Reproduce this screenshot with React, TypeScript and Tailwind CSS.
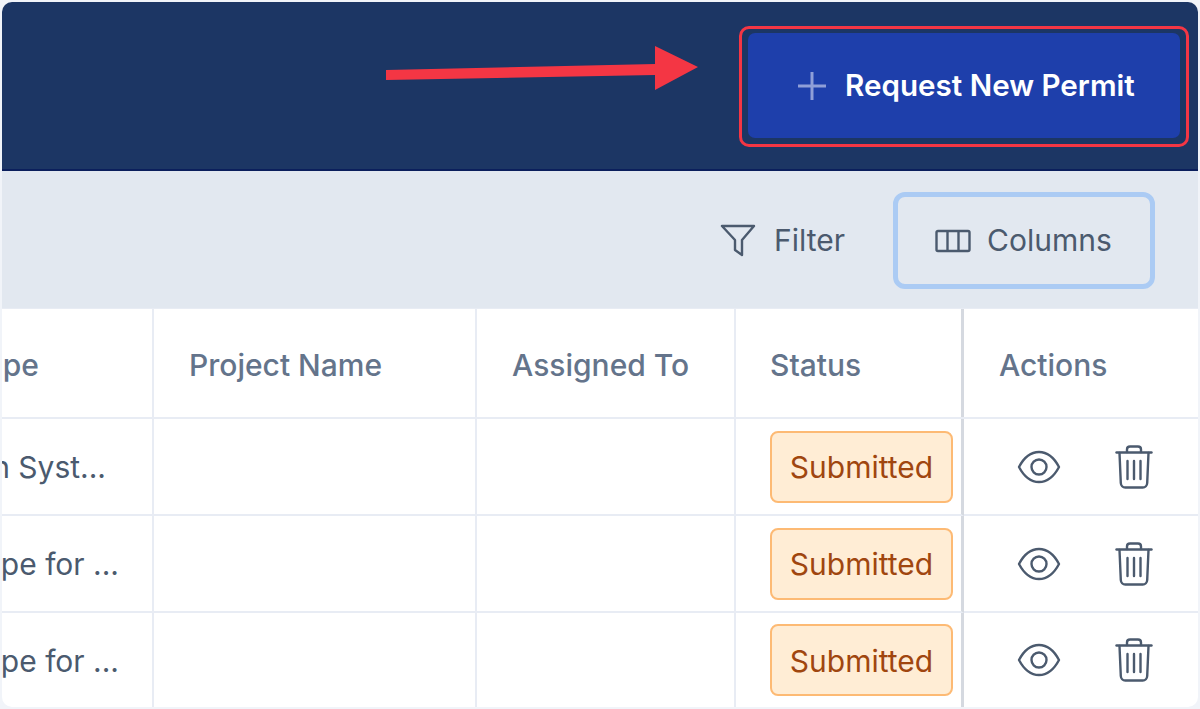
const font = "font-['Inter',sans-serif]";

function EyeIcon() {
  return (
    <svg width="44" height="36" viewBox="0 0 44 36" fill="none" stroke="#4b5a6e" strokeWidth="2.4" strokeLinejoin="round">
      <path d="M2 18C7 8.500 14 3 22 3s15 5.500 20 15c-5 9.500-12 15-20 15S7 27.500 2 18Z" />
      <circle cx="22" cy="18" r="7.500" />
    </svg>
  );
}

function TrashIcon() {
  return (
    <svg width="38" height="44" viewBox="0 0 38 44" fill="none" stroke="#4b5a6e" strokeWidth="2.400" strokeLinecap="round" strokeLinejoin="round">
      <path d="M1.500 7.500h35" />
      <path d="M12 7V4.500C12 2.800 13.300 1.500 15 1.500h8c1.700 0 3 1.300 3 3V7" />
      <path d="M4.500 8l1.300 30c.1 2.500 2 4.500 4.500 4.500h17.400c2.500 0 4.400-2 4.500-4.500L33.500 8" />
      <path d="M12.500 16v18M19 16v18M25.500 16v18" />
    </svg>
  );
}

function Row({ text, end, last }: { text: string; end: string; last?: boolean }) {
  const line = last ? '' : 'border-b-[2px] border-b-[#e8ecf4]';
  return (
    <div className={`grid grid-cols-[152px_323px_259px_228px_1fr] ${last ? 'h-[94px]' : 'h-[97px]'}`}>
      <div className={`flex items-center justify-end overflow-hidden whitespace-nowrap pt-[2px] text-[30px] text-[#4b5a6e] border-r-[2px] border-r-[#e8ecf4] ${end} ${line}`}>
        {text}
      </div>
      <div className={`border-r-[2px] border-r-[#e8ecf4] ${line}`} />
      <div className={`border-r-[2px] border-r-[#e8ecf4] ${line}`} />
      <div className={`flex items-center pl-[34px] border-r-[3px] border-r-[#d5d9e0] ${line}`}>
        <span className="flex h-[72px] w-[183px] items-center justify-center rounded-[8px] border-[2px] border-[#fdba74] bg-[#ffedd5] pt-[2px] text-[30px] text-[#a0460f]">
          Submitted
        </span>
      </div>
      <div className={`flex items-center gap-[54px] pl-[53px] ${line}`}>
        <EyeIcon />
        <TrashIcon />
      </div>
    </div>
  );
}

export default function App() {
  return (
    <div className={`relative h-[709px] w-[1200px] overflow-hidden bg-[#f1f4f9] p-[2px] ${font}`}>
      <div className="flex h-[705px] flex-col overflow-hidden rounded-[10px] bg-white">
        <div className="flex h-[169px] shrink-0 items-start justify-end border-b-[2px] border-b-[#0b1f5c] bg-[#1c3664] pr-[18px] pt-[31px]">
          <button className="flex h-[105px] w-[432px] items-center gap-[19px] rounded-[7px] bg-[#1e3fab] pl-[50px] text-[29.6px] font-semibold text-white">
            <svg width="28" height="28" viewBox="0 0 28 28" fill="none" stroke="#8f9fd8" strokeWidth="3">
              <path d="M14 0v28M0 14h28" />
            </svg>
            Request New Permit
          </button>
        </div>

        <div className="flex h-[138px] shrink-0 items-center justify-end border-b border-b-[#e8ecf4] bg-[#e2e8f0] pt-[2px] pr-[43px] text-[30px] text-[#4b5a6e]">
          <div className="flex items-center gap-[18px]">
            <svg width="36" height="33" viewBox="0 0 36 33" fill="none" stroke="#4b5a6e" strokeWidth="2.400" strokeLinejoin="round">
              <path d="M2 2h32L22 16v15l-7-5V16Z" />
            </svg>
            Filter
          </div>
          <div className="ml-[48px] flex h-[97px] w-[262px] items-center gap-[16px] rounded-[12px] border-[5px] border-[#abcbf4] pl-[37px]">
            <svg width="36" height="24" viewBox="0 0 36 24" fill="none" stroke="#4b5a6e" strokeWidth="2.400">
              <rect x="1.500" y="2" width="33" height="20" rx="1.500" />
              <path d="M12.500 2v20M23.500 2v20" />
            </svg>
            Columns
          </div>
        </div>

        <div className="grid h-[110px] shrink-0 grid-cols-[152px_323px_259px_228px_1fr] border-b-[2px] border-b-[#e8ecf4] text-[30px] font-medium text-[#64748b]">
          <div className="flex items-center justify-end overflow-hidden border-r-[2px] border-r-[#e8ecf4] pr-[113px] pt-[5px]">pe</div>
          <div className="flex items-center border-r-[2px] border-r-[#e8ecf4] pl-[35px] pt-[5px]">Project Name</div>
          <div className="flex items-center border-r-[2px] border-r-[#e8ecf4] pl-[35px] pt-[5px]">Assigned To</div>
          <div className="flex items-center border-r-[3px] border-r-[#d5d9e0] pl-[34px] pt-[5px]">Status</div>
          <div className="flex items-center pl-[35px] pt-[5px]">Actions</div>
        </div>

        <Row text="n Syst..." end="pr-[46px]" />
        <Row text="pe for ..." end="pr-[33px]" />
        <Row text="pe for ..." end="pr-[33px]" last />
      </div>

      {/* annotations drawn over the screenshot */}
      <div className="absolute left-[739px] top-[26px] h-[121px] w-[450px] rounded-[10px] border-[3px] border-[#f43644]" />
      <svg className="absolute left-[386px] top-[44px]" width="314" height="48" viewBox="0 0 314 48" fill="#f43644">
        <path d="M0 26l269-6V2l43 21-43 23V31L0 36Z" />
      </svg>
    </div>
  );
}
